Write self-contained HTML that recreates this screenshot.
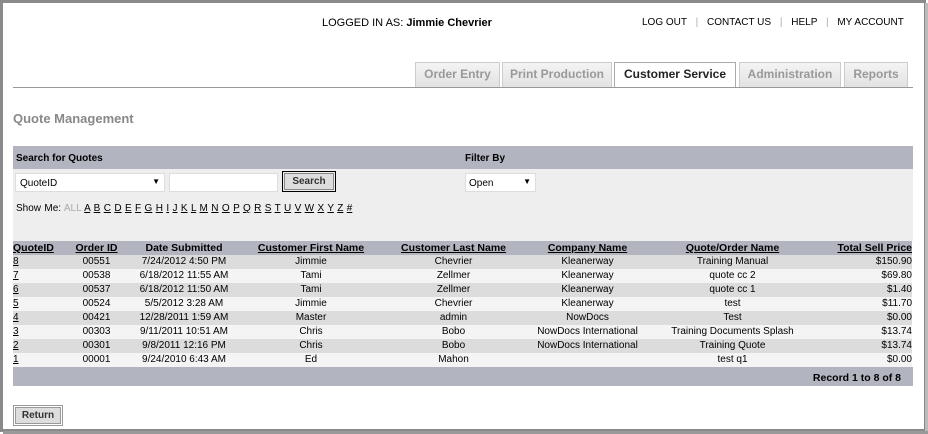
<!DOCTYPE html>
<html><head><style>
*{margin:0;padding:0;box-sizing:border-box}
body{width:928px;height:434px;background:#fff;font-family:"Liberation Sans",Arial,sans-serif;position:relative;overflow:hidden;color:#000}
.frame{position:absolute;left:0;top:0;width:926px;height:432px;border:3px solid #8a8a8a;border-right:2px solid #888}
.shadow{position:absolute;right:0;top:3px;width:3px;height:431px;background:#bbb}
.shadowb{position:absolute;left:3px;bottom:0;height:3px;width:925px;background:#999}
.a{position:absolute}
.top{font-size:11px;top:17px}
.tab{position:absolute;top:62px;height:25px;border:1px solid #ccc;border-bottom:none;background:linear-gradient(#f4f4f4,#e2e2e2);color:#999;font-weight:bold;font-size:12px;text-align:center;line-height:23px}
.tab.on{background:#fff;color:#222;border-color:#aaa;height:26px}
table{border-collapse:collapse;table-layout:fixed;position:absolute;left:13px;top:241px;width:899px;font-size:10px}
td,th{height:14px;padding:0;text-align:center;white-space:nowrap;line-height:14px}
th{background:#b2b4bf;font-size:10.5px;height:14px}
th span{text-decoration:underline}
tr:nth-child(even) td{background:#dcdcdc}
tr:nth-child(odd) td{background:#f4f4f4}
td:first-child,th:first-child{text-align:left}
td:last-child,th:last-child{text-align:right}
td u{color:#000}
</style></head><body>
<div class="frame"></div><div class="shadow"></div><div class="shadowb"></div>
<div class="a top" style="left:322px;font-size:11px">LOGGED IN AS: <b>Jimmie Chevrier</b></div>
<div class="a top" style="left:642px;font-size:10px">LOG OUT <span style="color:#aaa;margin:0 6px">|</span> CONTACT US <span style="color:#aaa;margin:0 6px">|</span> HELP <span style="color:#aaa;margin:0 6px">|</span> MY ACCOUNT</div>
<div class="tab" style="left:415px;width:85px">Order Entry</div>
<div class="tab" style="left:502px;width:110px">Print Production</div>
<div class="tab on" style="left:614px;width:122px">Customer Service</div>
<div class="tab" style="left:739px;width:102px">Administration</div>
<div class="tab" style="left:844px;width:64px">Reports</div>
<div class="a" style="left:13px;top:87px;width:900px;height:1px;background:#999"></div>
<div class="a" style="left:13px;top:111px;font-size:13px;font-weight:bold;color:#888">Quote Management</div>
<div class="a" style="left:13px;top:146px;width:900px;height:23px;background:#b2b4bf"></div>
<div class="a" style="left:13px;top:169px;width:900px;height:72px;background:#eee"></div>
<div class="a" style="left:16px;top:153px;font-size:10px;font-weight:bold">Search for Quotes</div>
<div class="a" style="left:465px;top:153px;font-size:10px;font-weight:bold">Filter By</div>
<div class="a" style="left:15px;top:173px;width:150px;height:19px;background:#fff;border:1px solid #ddd;font-size:10px;padding:4px 4px">QuoteID<span style="position:absolute;right:4px;top:3px;font-size:8px">▼</span></div>
<div class="a" style="left:169px;top:173px;width:109px;height:19px;background:#fff;border:1px solid #ddd"></div>
<div class="a" style="left:282px;top:171px;width:54px;height:21px;border:1px solid #000;padding:1px"><div style="border:1px solid #888;background:#ddd;height:17px;font-size:10px;font-weight:bold;text-align:center;line-height:15px;color:#333">Search</div></div>
<div class="a" style="left:465px;top:173px;width:71px;height:19px;background:#fff;border:1px solid #ddd;font-size:10px;padding:4px 3px">Open<span style="position:absolute;right:4px;top:3px;font-size:8px">▼</span></div>
<div class="a" style="left:16px;top:203px;font-size:10px;word-spacing:0.6px">Show Me: <span style="color:#aaa">ALL</span> <u>A</u> <u>B</u> <u>C</u> <u>D</u> <u>E</u> <u>F</u> <u>G</u> <u>H</u> <u>I</u> <u>J</u> <u>K</u> <u>L</u> <u>M</u> <u>N</u> <u>O</u> <u>P</u> <u>Q</u> <u>R</u> <u>S</u> <u>T</u> <u>U</u> <u>V</u> <u>W</u> <u>X</u> <u>Y</u> <u>Z</u> <u>#</u></div>
<table>
<colgroup><col style="width:47px"><col style="width:73px"><col style="width:102px"><col style="width:152px"><col style="width:133px"><col style="width:135px"><col style="width:155px"><col style="width:102px"></colgroup>
<tr><th><span>QuoteID</span></th><th><span>Order ID</span></th><th>Date Submitted</th><th><span>Customer First Name</span></th><th><span>Customer Last Name</span></th><th><span>Company Name</span></th><th><span>Quote/Order Name</span></th><th><span>Total Sell Price</span></th></tr>
<tr><td><u>8</u></td><td>00551</td><td>7/24/2012 4:50 PM</td><td>Jimmie</td><td>Chevrier</td><td>Kleanerway</td><td>Training Manual</td><td>$150.90</td></tr>
<tr><td><u>7</u></td><td>00538</td><td>6/18/2012 11:55 AM</td><td>Tami</td><td>Zellmer</td><td>Kleanerway</td><td>quote cc 2</td><td>$69.80</td></tr>
<tr><td><u>6</u></td><td>00537</td><td>6/18/2012 11:50 AM</td><td>Tami</td><td>Zellmer</td><td>Kleanerway</td><td>quote cc 1</td><td>$1.40</td></tr>
<tr><td><u>5</u></td><td>00524</td><td>5/5/2012 3:28 AM</td><td>Jimmie</td><td>Chevrier</td><td>Kleanerway</td><td>test</td><td>$11.70</td></tr>
<tr><td><u>4</u></td><td>00421</td><td>12/28/2011 1:59 AM</td><td>Master</td><td>admin</td><td>NowDocs</td><td>Test</td><td>$0.00</td></tr>
<tr><td><u>3</u></td><td>00303</td><td>9/11/2011 10:51 AM</td><td>Chris</td><td>Bobo</td><td>NowDocs International</td><td>Training Documents Splash</td><td>$13.74</td></tr>
<tr><td><u>2</u></td><td>00301</td><td>9/8/2011 12:16 PM</td><td>Chris</td><td>Bobo</td><td>NowDocs International</td><td>Training Quote</td><td>$13.74</td></tr>
<tr><td><u>1</u></td><td>00001</td><td>9/24/2010 6:43 AM</td><td>Ed</td><td>Mahon</td><td></td><td>test q1</td><td>$0.00</td></tr>
</table>
<div class="a" style="left:13px;top:367px;width:900px;height:19px;background:#b2b4bf;font-size:10.5px;font-weight:bold;text-align:right;padding-right:12px;line-height:22px">Record 1 to 8 of 8</div>
<div class="a" style="left:13px;top:405px;width:50px;height:21px;border:1px solid #999;padding:1px"><div style="border:1px solid #999;background:#ddd;height:17px;font-size:10px;font-weight:bold;text-align:center;line-height:15px;color:#333">Return</div></div>
</body></html>
